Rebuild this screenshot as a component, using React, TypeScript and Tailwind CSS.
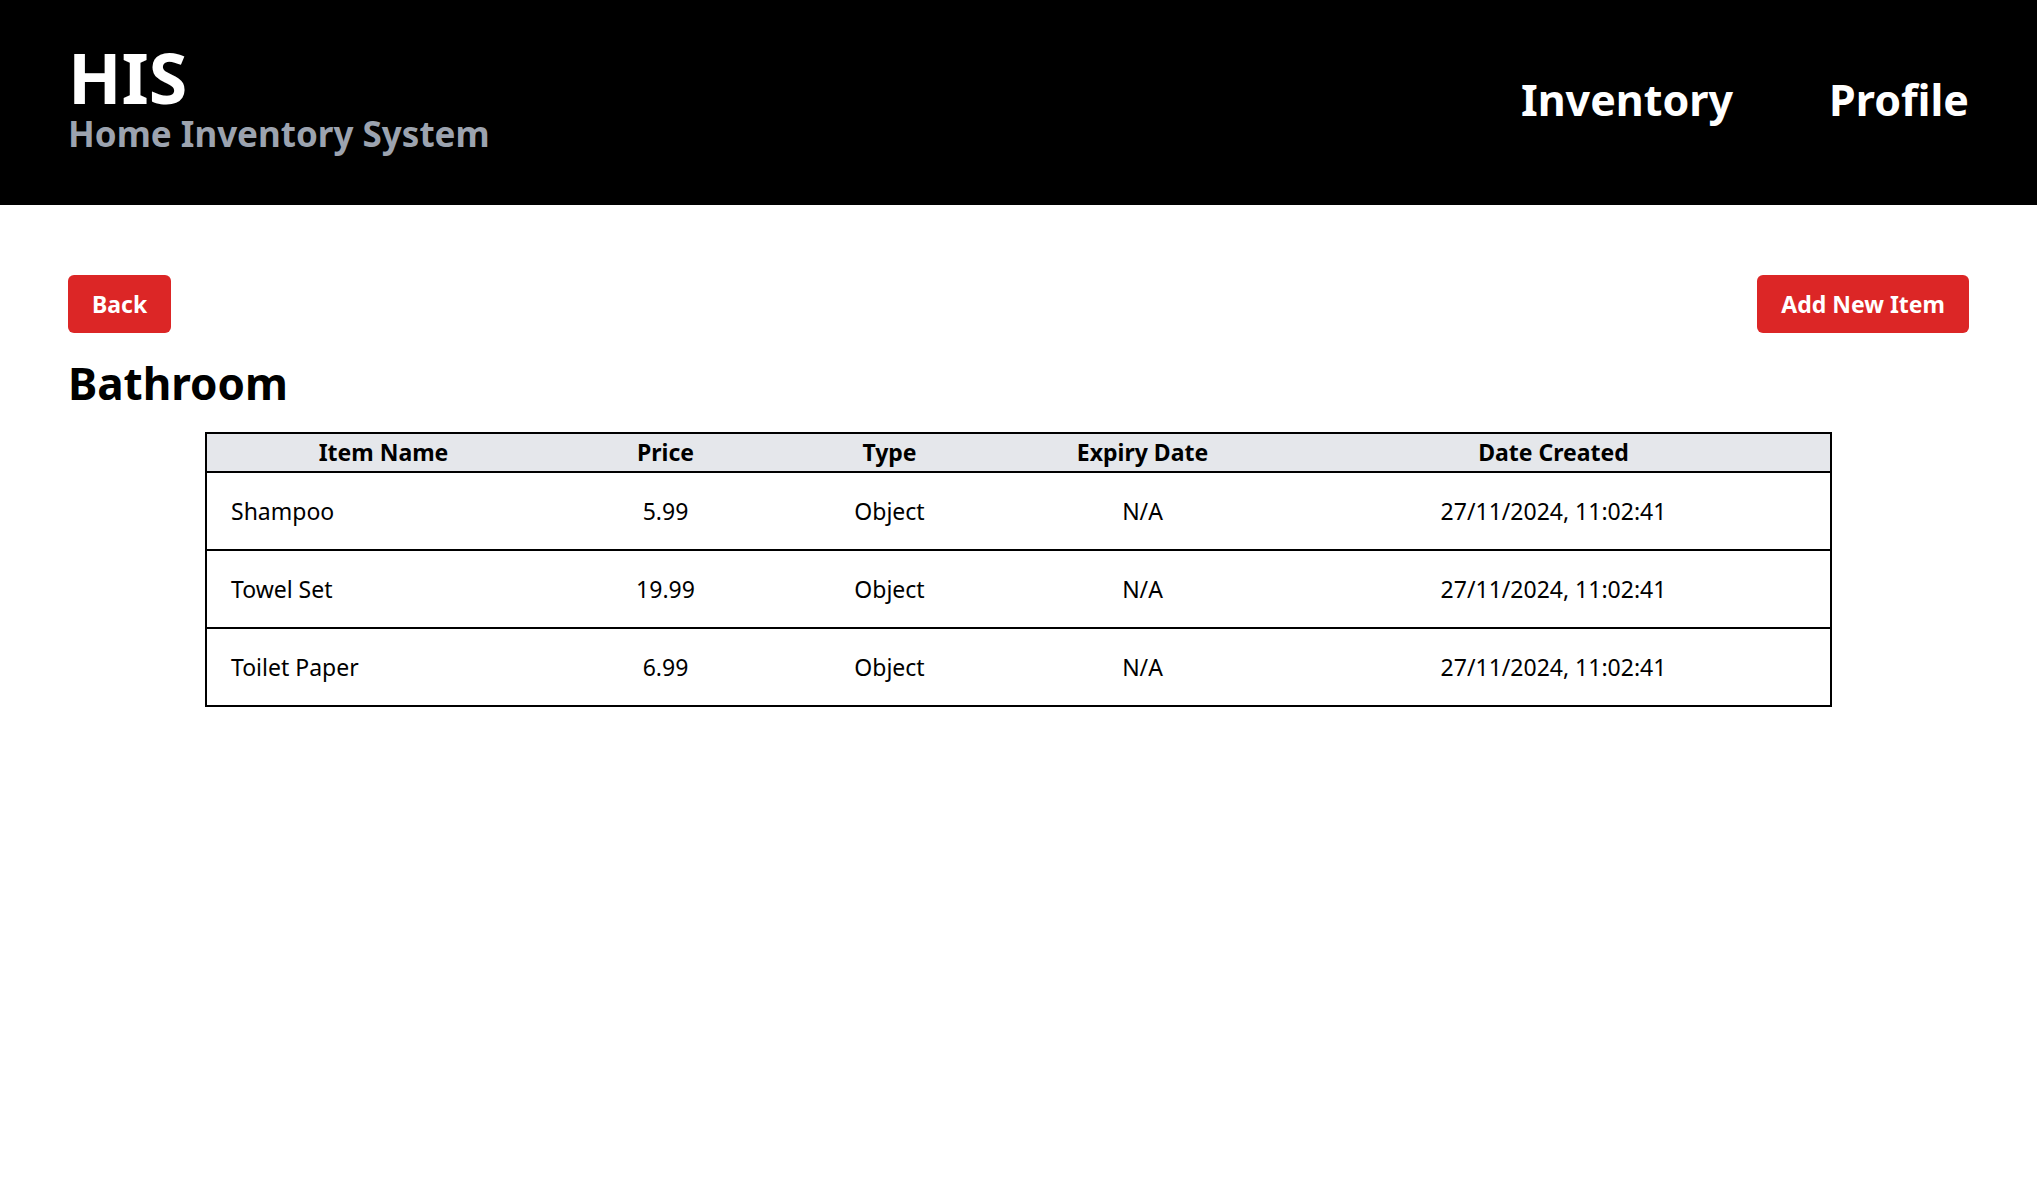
const items = [
  { name: 'Shampoo', price: '5.99', type: 'Object', expiry: 'N/A', created: '27/11/2024, 11:02:41' },
  { name: 'Towel Set', price: '19.99', type: 'Object', expiry: 'N/A', created: '27/11/2024, 11:02:41' },
  { name: 'Toilet Paper', price: '6.99', type: 'Object', expiry: 'N/A', created: '27/11/2024, 11:02:41' },
];

export default function App() {
  return (
    <div className="min-h-screen bg-white font-['Noto_Sans',sans-serif] text-black">
      <header className="flex h-[205px] items-center justify-between bg-black px-[68px]">
        <div className="pb-3">
          <div className="h-[70px] text-[70px] font-bold leading-none text-white">HIS</div>
          <div className="mt-[4px] text-[35px] font-bold leading-9 text-[#9ca3af]">Home Inventory System</div>
        </div>
        <nav className="flex gap-24 pb-[6px] text-[43px] font-bold leading-none text-white">
          <a href="#">Inventory</a>
          <a href="#">Profile</a>
        </nav>
      </header>

      <main className="px-[68px] pt-[70px]">
        <div className="flex justify-between">
          <button className="h-[58px] rounded-md bg-[#dc2626] px-6 text-[23px] font-bold text-white">Back</button>
          <button className="h-[58px] rounded-md bg-[#dc2626] px-6 text-[23px] font-bold text-white">
            Add New Item
          </button>
        </div>

        <h1 className="mt-7 text-[44px] font-bold leading-none">Bathroom</h1>

        <table className="mx-auto mt-[27px] w-[1627px] table-fixed border-collapse border-2 border-black">
          <colgroup>
            <col className="w-[354px]" />
            <col className="w-[211px]" />
            <col className="w-[237px]" />
            <col className="w-[269px]" />
            <col />
          </colgroup>
          <thead>
            <tr className="border-b-2 border-black bg-[#e5e7eb] text-[23px] font-bold">
              <th className="py-[3px] leading-[31px]">Item Name</th>
              <th className="py-[3px] leading-[31px]">Price</th>
              <th className="py-[3px] leading-[31px]">Type</th>
              <th className="py-[3px] leading-[31px]">Expiry Date</th>
              <th className="py-[3px] leading-[31px]">Date Created</th>
            </tr>
          </thead>
          <tbody className="text-[23px]">
            {items.map((item) => (
              <tr key={item.name} className="border-b-2 border-black">
                <td className="py-[22px] pl-6 text-left leading-8">{item.name}</td>
                <td className="py-[22px] text-center leading-8">{item.price}</td>
                <td className="py-[22px] text-center leading-8">{item.type}</td>
                <td className="py-[22px] text-center leading-8">{item.expiry}</td>
                <td className="py-[22px] text-center leading-8">{item.created}</td>
              </tr>
            ))}
          </tbody>
        </table>
      </main>
    </div>
  );
}
